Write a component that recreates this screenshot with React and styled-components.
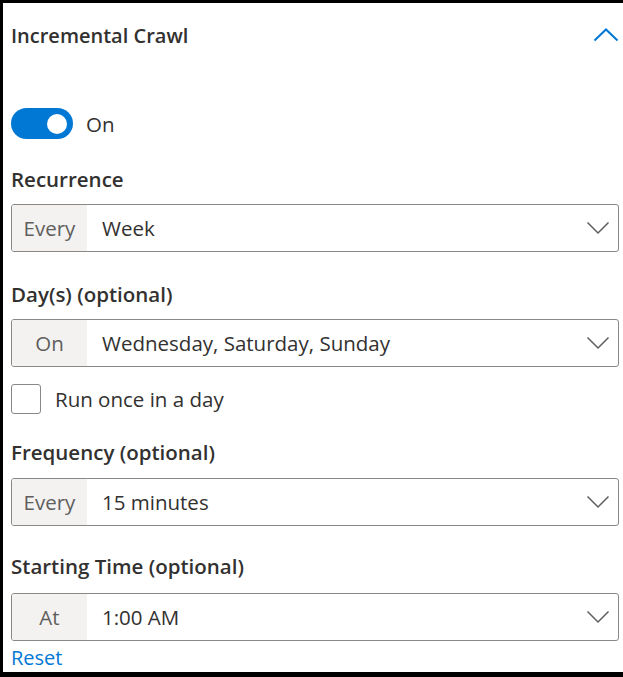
import React, { useState } from "react";
import styled, { createGlobalStyle } from "styled-components";

const GlobalStyle = createGlobalStyle`
  html, body {
    margin: 0;
    padding: 0;
    background: #000;
  }
  body {
    font-family: "Open Sans", "Noto Sans", sans-serif;
  }
`;

const Panel = styled.div`
  box-sizing: border-box;
  margin: 3px 0 5px 3px;
  height: 669px;
  background: #fff;
  padding: 0 4px 0 8px;
  display: flex;
  flex-direction: column;
  color: #323130;
`;

const Header = styled.div`
  height: 64px;
  display: flex;
  align-items: center;
  justify-content: space-between;
`;

const Title = styled.h2`
  margin: 0;
  font-size: 20px;
  font-weight: 600;
  color: #323130;
`;

const IconButton = styled.button`
  border: none;
  background: none;
  padding: 0;
  display: flex;
  cursor: pointer;
`;

const ToggleRow = styled.label`
  margin-top: 41px;
  height: 31px;
  display: flex;
  align-items: center;
  gap: 13px;
  font-size: 20.5px;
  cursor: pointer;
`;

const Switch = styled.span`
  position: relative;
  width: 62px;
  height: 31px;
  border-radius: 16px;
  background: ${(p) => (p.$on ? "#0078d4" : "#fff")};
  border: ${(p) => (p.$on ? "none" : "1.5px solid #605e5c")};
  box-sizing: border-box;

  &::after {
    content: "";
    position: absolute;
    top: 5.5px;
    left: ${(p) => (p.$on ? "36px" : "6px")};
    width: 20px;
    height: 20px;
    border-radius: 50%;
    background: ${(p) => (p.$on ? "#fff" : "#605e5c")};
  }
`;

const Label = styled.div`
  margin-top: ${(p) => p.$top}px;
  line-height: 28px;
  font-size: 20.5px;
  font-weight: 600;
  color: #323130;
`;

const Field = styled.div`
  margin-top: ${(p) => p.$top}px;
  height: 48px;
  box-sizing: border-box;
  border: 1.5px solid #8a8886;
  border-radius: 3px;
  display: flex;
  align-items: stretch;
  overflow: hidden;
  cursor: pointer;
`;

const Prefix = styled.div`
  width: 75px;
  background: #f3f2f1;
  color: #605e5c;
  font-size: 20.5px;
  display: flex;
  align-items: center;
  justify-content: center;
`;

const Value = styled.div`
  flex: 1;
  padding-left: 15px;
  display: flex;
  align-items: center;
  font-size: 20.5px;
  color: #323130;
`;

const Caret = styled.div`
  display: flex;
  align-items: center;
  padding-right: 8px;
`;

const CheckRow = styled.label`
  margin-top: 16px;
  height: 31px;
  display: flex;
  align-items: center;
  gap: 14px;
  font-size: 20.5px;
  color: #323130;
  cursor: pointer;
`;

const Box = styled.span`
  width: 30px;
  height: 30px;
  box-sizing: border-box;
  border: 1.5px solid #8a8886;
  border-radius: 3px;
`;

const ResetLink = styled.a`
  margin-top: 5px;
  line-height: 24px;
  font-size: 20px;
  color: #0078d4;
  text-decoration: none;
  cursor: pointer;
`;

const ChevronDown = () => (
  <svg width="24" height="14" viewBox="0 0 24 14">
    <path d="M1.5 1.5 L12 12 L22.5 1.5" fill="none" stroke="#605e5c" strokeWidth="1.5" />
  </svg>
);

const ChevronUp = () => (
  <svg width="26" height="14" viewBox="0 0 26 14">
    <path d="M1.5 12.5 L13 1.5 L24.5 12.5" fill="none" stroke="#0078d4" strokeWidth="2" />
  </svg>
);

const Select = ({ top, prefix, value }) => (
  <Field $top={top}>
    <Prefix>{prefix}</Prefix>
    <Value>{value}</Value>
    <Caret>
      <ChevronDown />
    </Caret>
  </Field>
);

export default function App() {
  const [on, setOn] = useState(true);

  return (
    <>
      <GlobalStyle />
      <Panel>
        <Header>
          <Title>Incremental Crawl</Title>
          <IconButton aria-label="Collapse">
            <ChevronUp />
          </IconButton>
        </Header>

        <ToggleRow onClick={() => setOn(!on)}>
          <Switch $on={on} />
          <span>{on ? "On" : "Off"}</span>
        </ToggleRow>

        <Label $top={26}>Recurrence</Label>
        <Select top={11} prefix="Every" value="Week" />

        <Label $top={28}>Day(s) (optional)</Label>
        <Select top={11} prefix="On" value="Wednesday, Saturday, Sunday" />

        <CheckRow>
          <Box />
          <span>Run once in a day</span>
        </CheckRow>

        <Label $top={24}>Frequency (optional)</Label>
        <Select top={12} prefix="Every" value="15 minutes" />

        <Label $top={26}>Starting Time (optional)</Label>
        <Select top={13} prefix="At" value="1:00 AM" />

        <ResetLink>Reset</ResetLink>
      </Panel>
    </>
  );
}
